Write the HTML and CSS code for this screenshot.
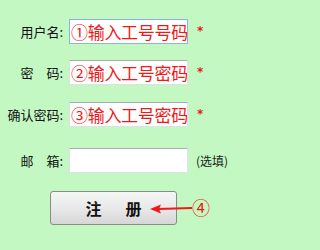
FILE: index.html
```html
<!DOCTYPE html>
<html lang="zh-CN">
<head>
<meta charset="utf-8">
<link rel="stylesheet" href="styles.css">
</head>
<body>
<form class="form">
  <div class="row r1">
    <label class="label">用户名:</label>
    <input class="field focus" type="text" value="①输入工号号码">
    <span class="req">*</span>
  </div>
  <div class="row r2">
    <label class="label">密　码:</label>
    <input class="field" type="text" value="②输入工号密码">
    <span class="req">*</span>
  </div>
  <div class="row r3">
    <label class="label">确认密码:</label>
    <input class="field" type="text" value="③输入工号密码">
    <span class="req">*</span>
  </div>
  <div class="row r4">
    <label class="label">邮　箱:</label>
    <input class="field" type="text" value="">
    <span class="opt">(选填)</span>
  </div>
  <div class="btnrow">
    <button class="btn" type="button"><span>注</span><span>册</span></button>
    <svg class="arrow" width="44" height="12" viewBox="0 0 44 12">
      <line x1="8" y1="6" x2="42" y2="5" stroke="#f01818" stroke-width="2"/>
      <polygon points="0,6 11,1.5 9,6 11,10.5" fill="#f01818"/>
    </svg>
    <span class="step">④</span>
  </div>
</form>
</body>
</html>
```
FILE: styles.css
```css
html, body {
  margin: 0;
  padding: 0;
  background: #c3f8c3;
  width: 250px;
  height: 250px;
  overflow: hidden;
}
.form {
  padding-top: 19px;
  font-family: "Noto Sans CJK SC", "Noto Sans", sans-serif;
}
.row {
  display: flex;
  align-items: center;
  height: 25px;
}
.r1 { margin-bottom: 16px; }
.r2 { margin-bottom: 17px; }
.r3 { margin-bottom: 21px; }
.r4 { margin-bottom: 18px; }
.label {
  width: 63px;
  text-align: right;
  font-size: 13px;
  color: #111;
  white-space: nowrap;
}
.field {
  box-sizing: border-box;
  width: 119px;
  height: 25px;
  margin: 0 0 0 6px;
  padding: 0 0 0 1px;
  border: 1px solid #dde1e6;
  border-top-color: #a9acb2;
  background: #fff;
  color: #f01818;
  font-family: "Noto Sans CJK SC", sans-serif;
  font-size: 17px;
  letter-spacing: -0.3px;
  outline: none;
}
.field.focus {
  border-color: #8fb4dc;
}
.req {
  margin-left: 9px;
  color: #e02020;
  font-size: 12px;
  font-family: "DejaVu Sans", sans-serif;
  font-weight: bold;
  line-height: 1;
  margin-top: -2px;
}
.opt {
  margin-left: 8px;
  font-size: 12px;
  color: #222;
}
.btnrow {
  position: relative;
  padding-left: 50px;
  height: 34px;
}
.btn {
  box-sizing: border-box;
  width: 127px;
  height: 34px;
  border: 1px solid #8a8a8a;
  border-radius: 3px;
  background: linear-gradient(#f6f6f6, #e9e9e9 50%, #d6d6d6);
  display: flex;
  justify-content: center;
  align-items: center;
  gap: 24px;
  padding: 0;
  font-family: "Noto Sans CJK SC", sans-serif;
  font-size: 16px;
  font-weight: bold;
  color: #111;
}
.arrow {
  position: absolute;
  left: 150px;
  top: 12px;
}
.step {
  position: absolute;
  left: 192px;
  top: 4px;
  font-size: 18px;
  line-height: 24px;
  color: #f01818;
  font-family: "Noto Sans CJK SC", sans-serif;
}
```
